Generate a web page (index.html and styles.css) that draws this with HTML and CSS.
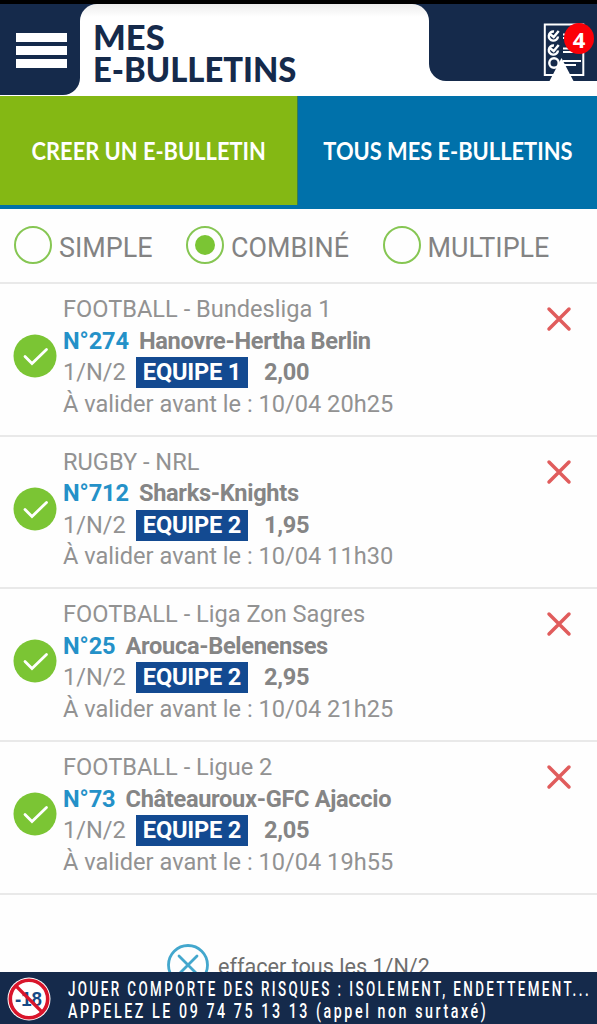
FILE: index.html
```
<!DOCTYPE html>
<html lang="fr">
<head>
    <meta charset="UTF-8">
    <meta name="viewport" content="width=device-width, initial-scale=1.0">
    <title>Mes e-bulletins</title>
    <link rel="stylesheet" href="styles.css">
</head>
<body>
    <header class="header">
        <button class="menu" aria-label="Menu">
            <span></span>
            <span></span>
            <span></span>
        </button>
        <h1 class="title"><span>MES</span><span class="title-bulletins">E-BULLETINS</span></h1>
        <div class="basket">
            <svg class="list-icon" width="56" height="62" viewBox="0 0 56 62">
                <rect x="4.8" y="9.5" width="38.5" height="50.5" fill="none" stroke="#fff" stroke-width="2"/>
                <g fill="none" stroke="#fff" stroke-width="2.4">
                    <path d="M14 16.500a4.600 4.600 0 1 0 4 5M10.500 19.500l3.200 2.500 5-6"/>
                    <path d="M14 30.500a4.600 4.600 0 1 0 4 5M10.500 33.500l3.200 2.500 5-6"/>
                    <circle cx="14" cy="48" r="4.700"/>
                    <path d="M23 19.500h15M23 23h11M23 33.500h15M23 37h12M23 46h18M23 50h13" stroke-width="1.800"/>
                </g>
            </svg>
            <svg class="pointer" width="25" height="24" viewBox="0 0 25 24"><path d="M0 24L12.500 0 25 24z" fill="#fff"/></svg>
            <span class="badge">4</span>
        </div>
    </header>

    <nav class="tabs">
        <a class="tab active"><span>CREER UN E-BULLETIN</span></a>
        <a class="tab"><span>TOUS MES E-BULLETINS</span></a>
    </nav>

    <div class="types">
        <label class="type"><i class="radio"></i><span>SIMPLE</span></label>
        <label class="type"><i class="radio checked"></i><span>COMBINÉ</span></label>
        <label class="type"><i class="radio"></i><span>MULTIPLE</span></label>
    </div>

    <main class="bets">
        <article class="bet">
            <svg class="check" viewBox="0 0 44 44"><circle cx="22" cy="22" r="21.5"/><path d="M12 22.5l7 7L33.5 15.5"/></svg>
            <div class="infos">
                <p>FOOTBALL - Bundesliga 1</p>
                <p class="match"><b class="num">N°274</b><b>Hanovre-Hertha Berlin</b></p>
                <p class="prono">1/N/2<b class="choice">EQUIPE 1</b><b>2,00</b></p>
                <p>À valider avant le : 10/04 20h25</p>
            </div>
            <svg class="delete" viewBox="0 0 26 26"><path d="M3 3l20 20M23 3L3 23"/></svg>
        </article>
        <article class="bet">
            <svg class="check" viewBox="0 0 44 44"><circle cx="22" cy="22" r="21.5"/><path d="M12 22.5l7 7L33.5 15.5"/></svg>
            <div class="infos">
                <p>RUGBY - NRL</p>
                <p class="match"><b class="num">N°712</b><b>Sharks-Knights</b></p>
                <p class="prono">1/N/2<b class="choice">EQUIPE 2</b><b>1,95</b></p>
                <p>À valider avant le : 10/04 11h30</p>
            </div>
            <svg class="delete" viewBox="0 0 26 26"><path d="M3 3l20 20M23 3L3 23"/></svg>
        </article>
        <article class="bet">
            <svg class="check" viewBox="0 0 44 44"><circle cx="22" cy="22" r="21.5"/><path d="M12 22.5l7 7L33.5 15.5"/></svg>
            <div class="infos">
                <p>FOOTBALL - Liga Zon Sagres</p>
                <p class="match"><b class="num">N°25</b><b>Arouca-Belenenses</b></p>
                <p class="prono">1/N/2<b class="choice">EQUIPE 2</b><b>2,95</b></p>
                <p>À valider avant le : 10/04 21h25</p>
            </div>
            <svg class="delete" viewBox="0 0 26 26"><path d="M3 3l20 20M23 3L3 23"/></svg>
        </article>
        <article class="bet">
            <svg class="check" viewBox="0 0 44 44"><circle cx="22" cy="22" r="21.5"/><path d="M12 22.5l7 7L33.5 15.5"/></svg>
            <div class="infos">
                <p>FOOTBALL - Ligue 2</p>
                <p class="match"><b class="num">N°73</b><b>Châteauroux-GFC Ajaccio</b></p>
                <p class="prono">1/N/2<b class="choice">EQUIPE 2</b><b>2,05</b></p>
                <p>À valider avant le : 10/04 19h55</p>
            </div>
            <svg class="delete" viewBox="0 0 26 26"><path d="M3 3l20 20M23 3L3 23"/></svg>
        </article>
    </main>

    <div class="clear">
        <svg class="clear-icon" viewBox="0 0 42 42"><circle cx="21" cy="21" r="19.5"/><path d="M12 12l18 18M30 12L12 30"/></svg>
        <span>effacer tous les 1/N/2</span>
    </div>

    <footer class="warning">
        <svg class="minus18" width="44" height="44" viewBox="0 0 44 44">
            <circle cx="22" cy="22" r="21.5" fill="#fff"/>
            <text x="8" y="29" textLength="27" lengthAdjust="spacingAndGlyphs">-18</text>
            <circle cx="22" cy="22" r="18.7" fill="none" stroke="#d9152b" stroke-width="3.6"/>
            <path d="M9 9l26 26" stroke="#d9152b" stroke-width="3.2"/>
        </svg>
        <p class="warning-text">
            <span class="line1">JOUER COMPORTE DES RISQUES : ISOLEMENT, ENDETTEMENT...</span>
            <span class="line2">APPELEZ LE 09 74 75 13 13 (appel non surtaxé)</span>
        </p>
    </footer>
</body>
</html>
```
FILE: styles.css
```
* {
    box-sizing: border-box;
}

body {
    margin: 0;
    height: 1024px;
    overflow: hidden;
    border-top: 4px solid black;
    background-color: #fefefe;
    font-family: Roboto, sans-serif;
    color: #929292;
}

h1, p {
    margin: 0;
}

/* header */
.header {
    display: flex;
    align-items: flex-start;
    height: 92px;
    background: linear-gradient(#152a4b 24px, white 24px);
}

.menu {
    display: flex;
    flex-direction: column;
    gap: 4px;
    width: 80px;
    height: 91px;
    padding: 29px 13px 0 16px;
    border: none;
    border-radius: 0 0 17px 0;
    background-color: #152a4b;
}

.menu span {
    height: 9px;
    background-color: white;
}

.title {
    display: flex;
    flex-direction: column;
    align-items: flex-start;
    width: 349px;
    height: 92px;
    padding: 17px 0 0 13px;
    border-radius: 17px 17px 0 0;
    background: linear-gradient(#ededed, white 13px);
    font-family: Lato, sans-serif;
    font-size: 34.5px;
    font-weight: 900;
    line-height: 32px;
    color: #152a4b;
}

.title span {
    transform-origin: left;
    white-space: nowrap;
}

.title-bulletins {
    transform: scaleX(0.95);
}

.basket {
    position: relative;
    flex: 1;
    height: 77px;
    border-radius: 0 0 0 17px;
    background-color: #152a4b;
}

.list-icon {
    display: block;
    margin: 11px 0 0 111px;
}

.pointer {
    position: absolute;
    top: 54px;
    right: 23px;
}

.badge {
    position: absolute;
    top: 19px;
    right: 3px;
    width: 30px;
    height: 31px;
    border-radius: 50%;
    background-color: #fb0007;
    font: bold 22px/32px "Open Sans", sans-serif;
    text-align: center;
    color: white;
}

/* tabs */
.tabs {
    display: flex;
    height: 113px;
    border-bottom: 4px solid #0071aa;
    background-color: #0071aa;
}

.tab {
    display: flex;
    justify-content: center;
    width: 299px;
    height: 109px;
    font: bold 24px/109px Lato, sans-serif;
    white-space: nowrap;
    color: white;
}

.tab span {
    transform: scaleX(0.91);
}

.tab.active {
    width: 298px;
    border-right: 1px solid #397d4e;
    background-color: #84b814;
}

/* bulletin type */
.types {
    display: flex;
    height: 75px;
    padding: 0 0 1px 14px;
    border-bottom: 2px solid #e9e9e9;
    font-size: 26.9px;
    color: #838383;
}

.type {
    display: flex;
    align-items: center;
    gap: 7px;
    margin-right: 33.5px;
}

.type span {
    padding-top: 5px;
}

.radio {
    width: 38px;
    height: 38px;
    border: 2px solid #86c653;
    border-radius: 50%;
}

.radio.checked {
    padding: 7px;
    background: #7bc534 content-box;
}

/* bets */
.bet {
    display: flex;
    height: 152.7px;
    padding: 10px 25px 0 13px;
    border-bottom: 2px solid #e9e9e9;
}

.check {
    width: 44px;
    height: 44px;
    margin: 40px 6px 0 0;
    fill: #7bc534;
}

.check path {
    fill: none;
    stroke: white;
    stroke-width: 2.8;
    stroke-linecap: round;
}

.infos {
    flex: 1;
    font-size: 23.6px;
    line-height: 31.5px;
    white-space: nowrap;
}

.infos b {
    letter-spacing: -0.32px;
    color: #858585;
}

.match, .prono {
    display: flex;
}

.match {
    gap: 10px;
}

.infos .num {
    letter-spacing: -0.1px;
    color: #2491c8;
}

.infos .choice {
    height: 31px;
    margin: 0 16px 0 10px;
    padding: 0 7px;
    background-color: #134a91;
    letter-spacing: -0.2px;
    color: white;
}

.delete {
    width: 26px;
    height: 26px;
    margin-top: 12px;
    fill: none;
    stroke: #e05c5c;
    stroke-width: 3.5;
    stroke-linecap: round;
}

.clear {
    display: flex;
    align-items: center;
    gap: 9px;
    padding: 49px 0 0 167px;
    font-size: 21.6px;
    color: #6e6e6e;
}

.clear span {
    padding-top: 4px;
}

.clear-icon {
    width: 42px;
    height: 42px;
    fill: none;
    stroke: #43a7cd;
    stroke-width: 2.8;
    stroke-linecap: round;
}

/* legal notice stuck to the bottom */
.warning {
    position: fixed;
    left: 0;
    right: 0;
    bottom: 0;
    display: flex;
    height: 52px;
    padding: 5px 0 0 7px;
    background-color: #152a4b;
    color: white;
}

.minus18 {
    flex-shrink: 0;
}

.minus18 text {
    font: bold 20px "Liberation Sans", sans-serif;
    fill: #164a86;
}

.warning-text {
    margin: 1px 0 0 17px;
    font-size: 20px;
    font-weight: 500;
    line-height: 22px;
    letter-spacing: 3.6px;
    white-space: nowrap;
}

.warning-text span {
    display: block;
    width: max-content;
    transform-origin: left;
}

.line1 {
    transform: scaleX(0.67);
}

.line2 {
    transform: scaleX(0.712);
}
```
